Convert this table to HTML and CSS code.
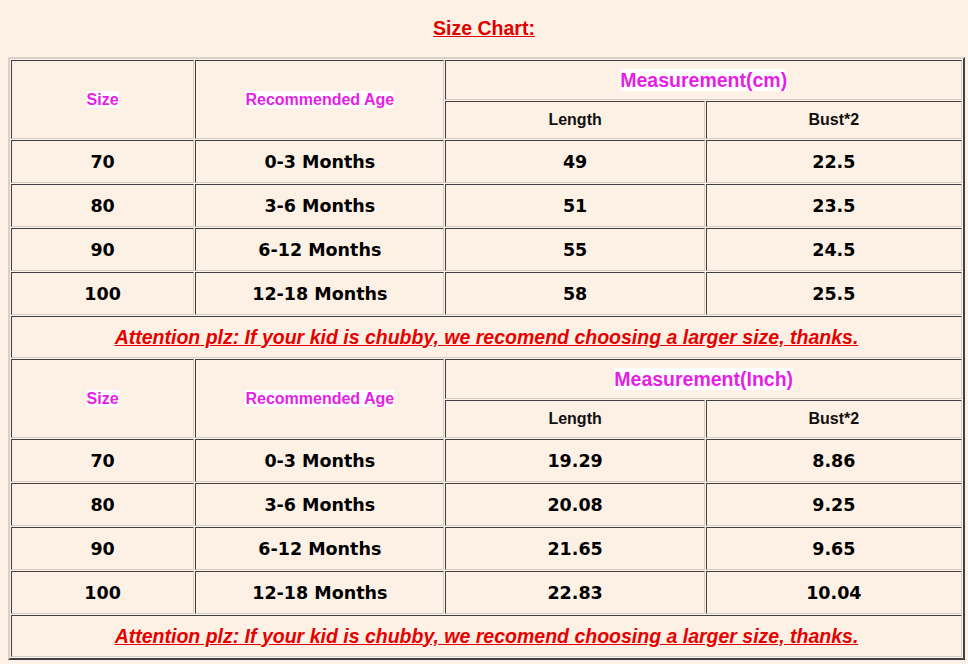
FILE: index.html
```html
<!DOCTYPE html>
<html>
<head>
<meta charset="utf-8">
<link rel="stylesheet" href="styles.css">
</head>
<body>
<div class="page">
  <p class="title">Size Chart:</p>
  <table class="chart">
    <colgroup>
      <col class="c1"><col class="c2"><col class="c3"><col class="c4">
    </colgroup>
    <tr class="h1">
      <td rowspan="2" class="hd"><span class="hl">Size</span></td>
      <td rowspan="2" class="hd"><span class="hl">Recommended Age</span></td>
      <td colspan="2" class="meas"><span class="hl">Measurement(cm)</span></td>
    </tr>
    <tr class="h2">
      <td class="sub">Length</td>
      <td class="sub">Bust*2</td>
    </tr>
    <tr class="row"><td>70</td><td>0-3 Months</td><td>49</td><td>22.5</td></tr>
    <tr class="row"><td>80</td><td>3-6 Months</td><td>51</td><td>23.5</td></tr>
    <tr class="row"><td>90</td><td>6-12 Months</td><td>55</td><td>24.5</td></tr>
    <tr class="row"><td>100</td><td>12-18 Months</td><td>58</td><td>25.5</td></tr>
    <tr class="note"><td colspan="4"><span>Attention plz: If your kid is chubby, we recomend choosing a larger size, thanks.</span></td></tr>
    <tr class="h1">
      <td rowspan="2" class="hd"><span class="hl">Size</span></td>
      <td rowspan="2" class="hd"><span class="hl">Recommended Age</span></td>
      <td colspan="2" class="meas"><span class="hl">Measurement(Inch)</span></td>
    </tr>
    <tr class="h2">
      <td class="sub">Length</td>
      <td class="sub">Bust*2</td>
    </tr>
    <tr class="row"><td>70</td><td>0-3 Months</td><td>19.29</td><td>8.86</td></tr>
    <tr class="row"><td>80</td><td>3-6 Months</td><td>20.08</td><td>9.25</td></tr>
    <tr class="row"><td>90</td><td>6-12 Months</td><td>21.65</td><td>9.65</td></tr>
    <tr class="row"><td>100</td><td>12-18 Months</td><td>22.83</td><td>10.04</td></tr>
    <tr class="note"><td colspan="4"><span>Attention plz: If your kid is chubby, we recomend choosing a larger size, thanks.</span></td></tr>
  </table>
</div>
</body>
</html>
```
FILE: styles.css
```css
html, body {
  margin: 0;
  padding: 0;
  background: #fdf0e4;
}
.page {
  padding: 17px 8px 0 8px;
}
.title {
  margin: 0 0 18px 0;
  text-align: center;
  font-family: "Liberation Sans", Arial, sans-serif;
  font-weight: bold;
  font-size: 19.5px;
  line-height: 22px;
  color: #e00000;
  text-decoration: underline;
}
.chart {
  width: 957px;
  table-layout: fixed;
  border-collapse: separate;
  border-spacing: 1px;
  border-style: solid;
  border-width: 2px;
  border-color: #d8d2ca #404040 #404040 #d8d2ca;
  background: #fdf0e4;
}
.c1 { width: 183px; }
.c2 { width: 249px; }
.c3 { width: 259px; }
.c4 { width: 256px; }
.chart td {
  border-style: solid;
  border-width: 1px;
  border-color: #404040 #d4cec6 #d4cec6 #404040;
  text-align: center;
  vertical-align: middle;
  padding: 0;
}
.row td {
  height: 41px;
  font-family: "DejaVu Sans", Verdana, sans-serif;
  font-weight: bold;
  font-size: 17.5px;
  color: #000;
}
.hl {
  background: #ffffff;
  color: #e61ee6;
  font-family: "Liberation Sans", Arial, sans-serif;
  font-weight: bold;
}
.hd .hl {
  font-size: 16px;
  line-height: 20px;
}
.h1 td.meas {
  height: 38px;
}
.meas .hl {
  font-size: 19.5px;
  line-height: 22px;
}
.h2 td.sub {
  height: 36px;
  font-family: "Liberation Sans", Arial, sans-serif;
  font-weight: bold;
  font-size: 16px;
  color: #111;
}
.note td {
  height: 40px;
  font-family: "Liberation Sans", Arial, sans-serif;
  font-weight: bold;
  font-style: italic;
  font-size: 19.5px;
  color: #e60000;
  text-decoration: underline;
}
```
